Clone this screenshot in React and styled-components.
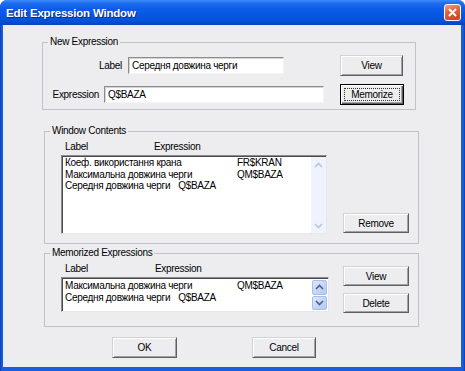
import React from 'react';
import styled, { createGlobalStyle } from 'styled-components';

const contents = [
  { label: 'Коеф. використання крана', expr: 'FR$KRAN', tab: true },
  { label: 'Максимальна довжина черги', expr: 'QM$BAZA', tab: true },
  { label: 'Середня довжина черги', expr: 'Q$BAZA', tab: false },
];

const memorized = [
  { label: 'Максимальна довжина черги', expr: 'QM$BAZA', tab: true },
  { label: 'Середня довжина черги', expr: 'Q$BAZA', tab: false },
];

const Chevron = ({ up, color }) => (
  <svg width="9" height="6" viewBox="0 0 9 6">
    <polyline
      points={up ? '1,5 4.5,1.5 8,5' : '1,1 4.5,4.5 8,1'}
      fill="none"
      stroke={color}
      strokeWidth="1.6"
    />
  </svg>
);

const App = () => {
  return (
    <>
      <GlobalStyle />
      <Window>
        <TitleBar>
          <Title>Edit Expression Window</Title>
          <CloseButton>
            <svg width="11" height="11" viewBox="0 0 11 11">
              <path d="M2 2 L9 9 M9 2 L2 9" stroke="#fff" strokeWidth="2" />
            </svg>
          </CloseButton>
        </TitleBar>

        <Body>
          <Group $top={11} $left={39} $width={374}>
            <Legend>New Expression</Legend>
            <GroupInner $pad="7px 11px 4px 0">
              <FieldColumn>
                <FieldRow>
                  <Caption $width={79}>Label</Caption>
                  <TextInput $gap={6} $width={156}>Середня довжина черги</TextInput>
                </FieldRow>
                <FieldRow>
                  <Caption $width={56}>Expression</Caption>
                  <TextInput $gap={5} $width={220}>Q$BAZA</TextInput>
                </FieldRow>
              </FieldColumn>
              <ButtonColumn $gap={8}>
                <Button $width={63} $height={21}>View</Button>
                <DefaultButton $width={64} $height={21}>
                  <FocusRing>Memorize</FocusRing>
                </DefaultButton>
              </ButtonColumn>
            </GroupInner>
          </Group>

          <Group $top={15} $left={41} $width={375}>
            <Legend>Window Contents</Legend>
            <GroupInner $pad="4px 9px 9px 16px">
              <ListColumn>
                <Headers>
                  <HeaderCell $width={89}>Label</HeaderCell>
                  <HeaderCell>Expression</HeaderCell>
                </Headers>
                <ListBox $width={266} $height={79}>
                  <Rows>
                    {contents.map(row => (
                      <Row key={row.label}>
                        <RowLabel $tab={row.tab}>{row.label}</RowLabel>
                        <span>{row.expr}</span>
                      </Row>
                    ))}
                  </Rows>
                  <ScrollBar $disabled>
                    <ScrollArrow $disabled>
                      <Chevron up color="#b9c6dc" />
                    </ScrollArrow>
                    <ScrollTrack />
                    <ScrollArrow $disabled>
                      <Chevron color="#b9c6dc" />
                    </ScrollArrow>
                  </ScrollBar>
                </ListBox>
              </ListColumn>
              <ButtonColumn $align="flex-end" $padBottom={1}>
                <Button $width={66} $height={20}>Remove</Button>
              </ButtonColumn>
            </GroupInner>
          </Group>

          <Group $top={3} $left={41} $width={375}>
            <Legend>Memorized Expressions</Legend>
            <GroupInner $pad="4px 9px 13px 16px">
              <ListColumn>
                <Headers>
                  <HeaderCell $width={90}>Label</HeaderCell>
                  <HeaderCell>Expression</HeaderCell>
                </Headers>
                <ListBox $width={268} $height={35}>
                  <Rows $padTop={1}>
                    {memorized.map(row => (
                      <Row key={row.label}>
                        <RowLabel $tab={row.tab}>{row.label}</RowLabel>
                        <span>{row.expr}</span>
                      </Row>
                    ))}
                  </Rows>
                  <ScrollBar>
                    <ScrollArrow $grow>
                      <Chevron up color="#4d6185" />
                    </ScrollArrow>
                    <ScrollArrow $grow>
                      <Chevron color="#4d6185" />
                    </ScrollArrow>
                  </ScrollBar>
                </ListBox>
              </ListColumn>
              <ButtonColumn $gap={7} $padTop={3}>
                <Button $width={66} $height={20}>View</Button>
                <Button $width={66} $height={20}>Delete</Button>
              </ButtonColumn>
            </GroupInner>
          </Group>

          <ButtonBar>
            <Button $width={65} $height={21}>OK</Button>
            <Button $width={64} $height={21}>Cancel</Button>
          </ButtonBar>
        </Body>
      </Window>
    </>
  );
};

const GlobalStyle = createGlobalStyle`
  html, body {
    margin: 0;
    padding: 0;
    background: #ffffff;
  }
  body {
    font-family: "Liberation Sans", Arial, sans-serif;
  }
`;

const Window = styled.div`
  width: 465px;
  height: 371px;
  box-sizing: border-box;
  display: flex;
  flex-direction: column;
  background: linear-gradient(90deg, #0a3fb8 0px, #1a5ee0 2px, #1a5ee0 calc(100% - 2px), #0a3fb8 100%);
  border-radius: 7px 7px 0 0;
  overflow: hidden;
`;

const TitleBar = styled.div`
  height: 25px;
  flex-shrink: 0;
  display: flex;
  align-items: center;
  justify-content: space-between;
  padding: 0 4px 0 6px;
  box-sizing: border-box;
  background: linear-gradient(
    180deg,
    #3e8cf8 0%,
    #1f6ef0 12%,
    #0c5de6 35%,
    #0657e3 60%,
    #0750d8 85%,
    #0642b8 100%
  );
`;

const Title = styled.span`
  color: #ffffff;
  font-size: 11.5px;
  font-weight: bold;
  letter-spacing: -0.2px;
  text-shadow: 1px 1px 0 #0b2a7a;
  padding-top: 1px;
`;

const CloseButton = styled.div`
  width: 17px;
  height: 17px;
  box-sizing: border-box;
  display: flex;
  align-items: center;
  justify-content: center;
  border: 1px solid #ffffff;
  border-radius: 3px;
  background: linear-gradient(160deg, #f0a08a 0%, #e2643f 40%, #c8401c 100%);
`;

const Body = styled.div`
  flex: 1;
  margin: 0 4px 4px 3px;
  background: #ededf0;
  display: flex;
  flex-direction: column;
  font-size: 10px;
  letter-spacing: -0.3px;
  color: #000000;
`;

const Group = styled.fieldset`
  box-sizing: border-box;
  width: ${p => p.$width}px;
  min-width: 0;
  margin: ${p => p.$top}px 0 0 ${p => p.$left}px;
  padding: 0;
  border: 1px solid #c2c2c6;
`;

const Legend = styled.legend`
  margin-left: 5px;
  padding: 0 2px;
  font-size: 10px;
  line-height: 12px;
  height: 12px;
`;

const GroupInner = styled.div`
  display: flex;
  align-items: flex-start;
  padding: ${p => p.$pad};
`;

const FieldColumn = styled.div`
  display: flex;
  flex-direction: column;
  gap: 8px;
  flex: 1;
`;

const FieldRow = styled.div`
  display: flex;
  align-items: center;
  height: 21px;
`;

const Caption = styled.span`
  width: ${p => p.$width}px;
  text-align: right;
`;

const TextInput = styled.div`
  box-sizing: border-box;
  width: ${p => p.$width}px;
  height: 17px;
  margin-left: ${p => p.$gap}px;
  padding: 1px 3px 0;
  line-height: 14px;
  background: #ffffff;
  border: 1px solid;
  border-color: #8c8c8c #f4f4f4 #f4f4f4 #8c8c8c;
  box-shadow: inset 1px 1px 0 #d4d4d4;
  white-space: nowrap;
`;

const ButtonColumn = styled.div`
  display: flex;
  flex-direction: column;
  gap: ${p => p.$gap || 0}px;
  padding-top: ${p => p.$padTop || 0}px;
  padding-bottom: ${p => p.$padBottom || 0}px;
  justify-content: ${p => p.$align || 'flex-start'};
  align-self: stretch;
  margin-left: auto;
`;

const Button = styled.div`
  box-sizing: border-box;
  width: ${p => p.$width}px;
  height: ${p => p.$height}px;
  display: flex;
  align-items: center;
  justify-content: center;
  background: #ededf0;
  border: 1px solid;
  border-color: #d2d2d6 #5e5e5e #5e5e5e #d2d2d6;
  box-shadow: inset 1px 1px 0 #ffffff, inset -1px -1px 0 #a2a2a6;
`;

const DefaultButton = styled(Button)`
  border-color: #000000;
  box-shadow: inset 1px 1px 0 #ffffff, inset -1px -1px 0 #5e5e5e, inset -2px -2px 0 #a2a2a6;
  padding: 3px;
`;

const FocusRing = styled.div`
  flex: 1;
  align-self: stretch;
  display: flex;
  align-items: center;
  justify-content: center;
  border: 1px dotted #333333;
`;

const ListColumn = styled.div`
  display: flex;
  flex-direction: column;
  gap: 2px;
`;

const Headers = styled.div`
  display: flex;
  height: 12px;
  line-height: 12px;
  padding-left: 4px;
`;

const HeaderCell = styled.span`
  width: ${p => (p.$width ? `${p.$width}px` : 'auto')};
`;

const ListBox = styled.div`
  box-sizing: border-box;
  width: ${p => p.$width}px;
  height: ${p => p.$height}px;
  display: flex;
  background: #ffffff;
  border: 1px solid;
  border-color: #8c8c8c #e8e8ec #e8e8ec #8c8c8c;
  box-shadow: inset 1px 1px 0 #4a4a4a;
  padding: 1px 0 0 1px;
`;

const Rows = styled.div`
  flex: 1;
  padding: ${p => p.$padTop || 0}px 2px 0 2px;
  line-height: 11.5px;
`;

const Row = styled.div`
  display: flex;
  white-space: nowrap;
`;

const RowLabel = styled.span`
  width: ${p => (p.$tab ? '172px' : 'auto')};
  margin-right: ${p => (p.$tab ? 0 : 8)}px;
`;

const ScrollBar = styled.div`
  width: 15px;
  display: flex;
  flex-direction: column;
  gap: ${p => (p.$disabled ? 0 : 1)}px;
  padding: ${p => (p.$disabled ? 0 : '1px 1px 1px 0')};
  background: ${p => (p.$disabled ? '#eef3fd' : '#ffffff')};
`;

const ScrollArrow = styled.div`
  box-sizing: border-box;
  height: ${p => (p.$grow ? 'auto' : '15px')};
  flex: ${p => (p.$grow ? 1 : '0 0 auto')};
  display: flex;
  align-items: center;
  justify-content: center;
  border-radius: 2px;
  background: ${p =>
    p.$disabled
      ? '#eef3fd'
      : 'linear-gradient(135deg, #dde8fd 0%, #c2d4f8 60%, #b4c9f4 100%)'};
  border: 1px solid ${p => (p.$disabled ? '#eef3fd' : '#a8bde8')};
`;

const ScrollTrack = styled.div`
  flex: 1;
  background: #eef3fd;
`;

const ButtonBar = styled.div`
  display: flex;
  gap: 75px;
  margin-top: 10px;
  padding-left: 109px;
`;

export default App;
